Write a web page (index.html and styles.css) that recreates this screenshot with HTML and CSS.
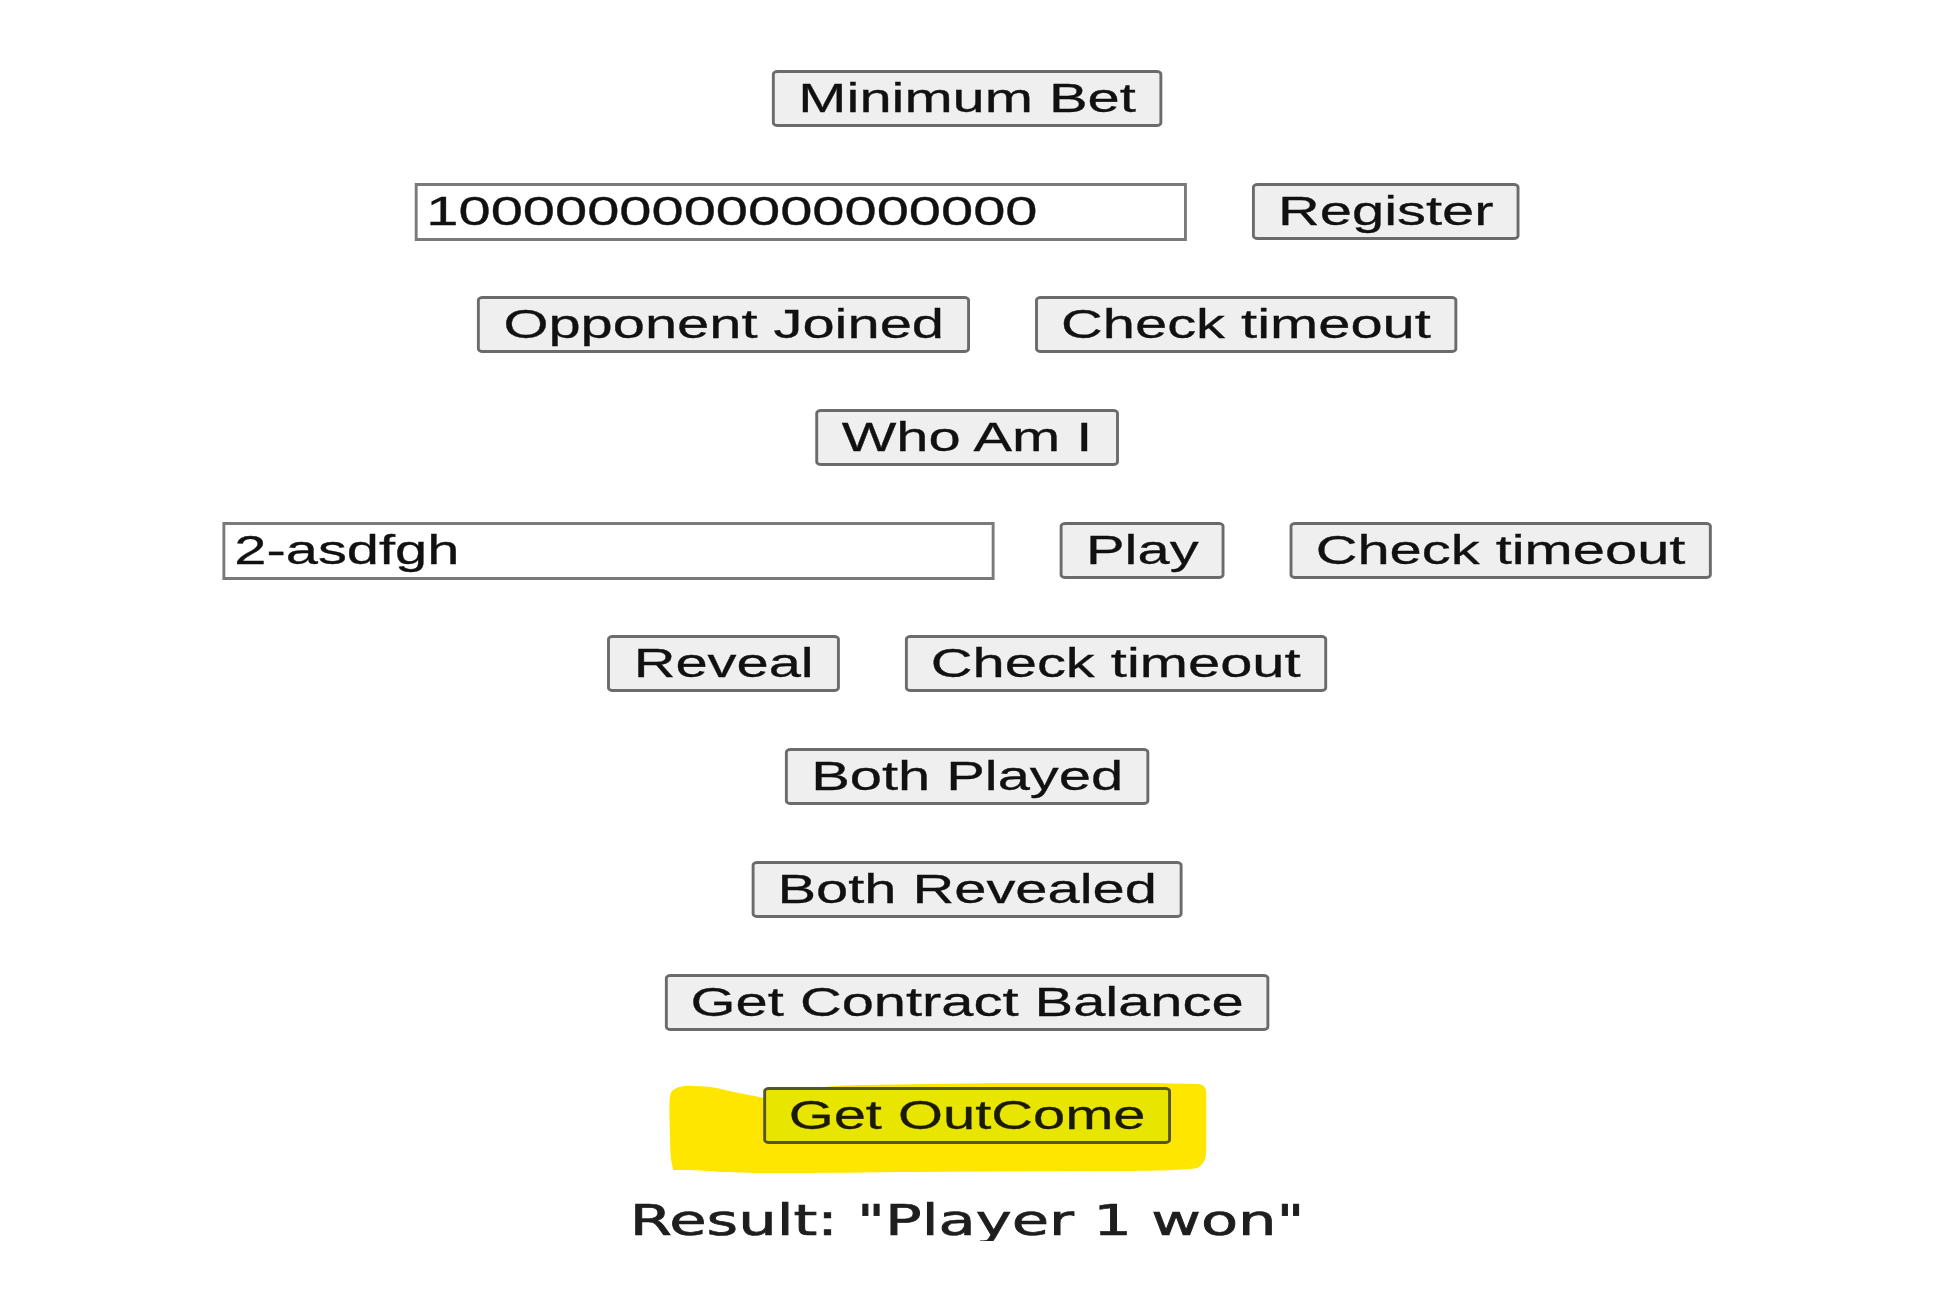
FILE: index.html
```html
<!DOCTYPE html>
<html lang="en">
<head>
<meta charset="utf-8">
<title>Game</title>
<link rel="stylesheet" href="styles.css">
</head>
<body>
<div class="page">
  <div class="row"><button class="btn">Minimum Bet</button></div>
  <div class="row"><input class="field" type="text" value="1000000000000000000"><button class="btn">Register</button></div>
  <div class="row"><button class="btn">Opponent Joined</button><button class="btn">Check timeout</button></div>
  <div class="row"><button class="btn">Who Am I</button></div>
  <div class="row"><input class="field" type="text" value="2-asdfgh"><button class="btn">Play</button><button class="btn">Check timeout</button></div>
  <div class="row"><button class="btn">Reveal</button><button class="btn">Check timeout</button></div>
  <div class="row"><button class="btn">Both Played</button></div>
  <div class="row"><button class="btn">Both Revealed</button></div>
  <div class="row"><button class="btn">Get Contract Balance</button></div>
  <div class="row">
    <span class="hl-wrap">
      <svg class="hl" viewBox="0 0 537 90" preserveAspectRatio="none" aria-hidden="true">
        <path d="M2 9 C6 4 14 2 24 3 C34 3 44 4 52 6 C64 9 80 12 96 15 L130 8 C150 4 170 2 191 2 L331 0 L481 0 L530 1 C535 2 537 5 537 10 L537 66 C537 76 535 81 528 85 C510 88 470 88 431 88 L231 89 C180 90 130 90 91 90 C75 90 62 89 51 89 C40 88 30 87 21 87 L4 87 C2 80 1 72 1 64 L0 30 C0 20 0 13 2 9 Z"/>
      </svg>
      <button class="btn btn-hl">Get OutCome</button>
    </span>
  </div>
  <p class="result">Result: "Player 1 won"</p>
</div>
</body>
</html>
```

FILE: styles.css
```css
html, body {
  margin: 0;
  padding: 0;
  background: #ffffff;
}

.page {
  box-sizing: border-box;
  width: 1342px;
  margin: 0 auto;
  display: flex;
  flex-direction: column;
  align-items: center;
  gap: 56px;
  padding: 70px 4px 0 0;
  transform: scaleX(1.446);
  transform-origin: 50% 0;
}

.row {
  display: flex;
  align-items: center;
  justify-content: center;
  gap: 45px;
  height: 57px;
}

.btn {
  box-sizing: border-box;
  height: 57px;
  margin: 0;
  padding: 0 16px;
  font-family: "Liberation Sans", Arial, sans-serif;
  font-size: 40px;
  color: #111111;
  -webkit-text-stroke: 0.3px #111111;
  background: #efefef;
  border-style: solid;
  border-width: 3px 2px;
  border-color: #6b6b6b;
  border-radius: 4px;
  line-height: normal;
  white-space: nowrap;
}

.field {
  box-sizing: border-box;
  width: 534px;
  height: 58px;
  margin: 0;
  padding: 0 6px;
  font-family: "Liberation Sans", Arial, sans-serif;
  font-size: 40px;
  color: #111111;
  -webkit-text-stroke: 0.3px #111111;
  background: #ffffff;
  border-style: solid;
  border-width: 3px 2px;
  border-color: #7a7a7a;
  border-radius: 0;
  outline: none;
}

.hl-wrap {
  position: relative;
  display: inline-flex;
  isolation: isolate;
}

.hl {
  position: absolute;
  left: -64.3px;
  top: -4px;
  width: 371.4px;
  height: 90px;
  z-index: -1;
  fill: #ffe600;
}

.btn-hl {
  background: #e8e600;
  border-color: #55552a;
  color: #1a1a00;
  -webkit-text-stroke: 0.3px #1a1a00;
}

.result {
  margin: 0;
  font-family: "DejaVu Sans", sans-serif;
  font-size: 42px;
  line-height: 41px;
  color: #1e1e1e;
  -webkit-text-stroke: 0.7px #1e1e1e;
  white-space: nowrap;
}
```
